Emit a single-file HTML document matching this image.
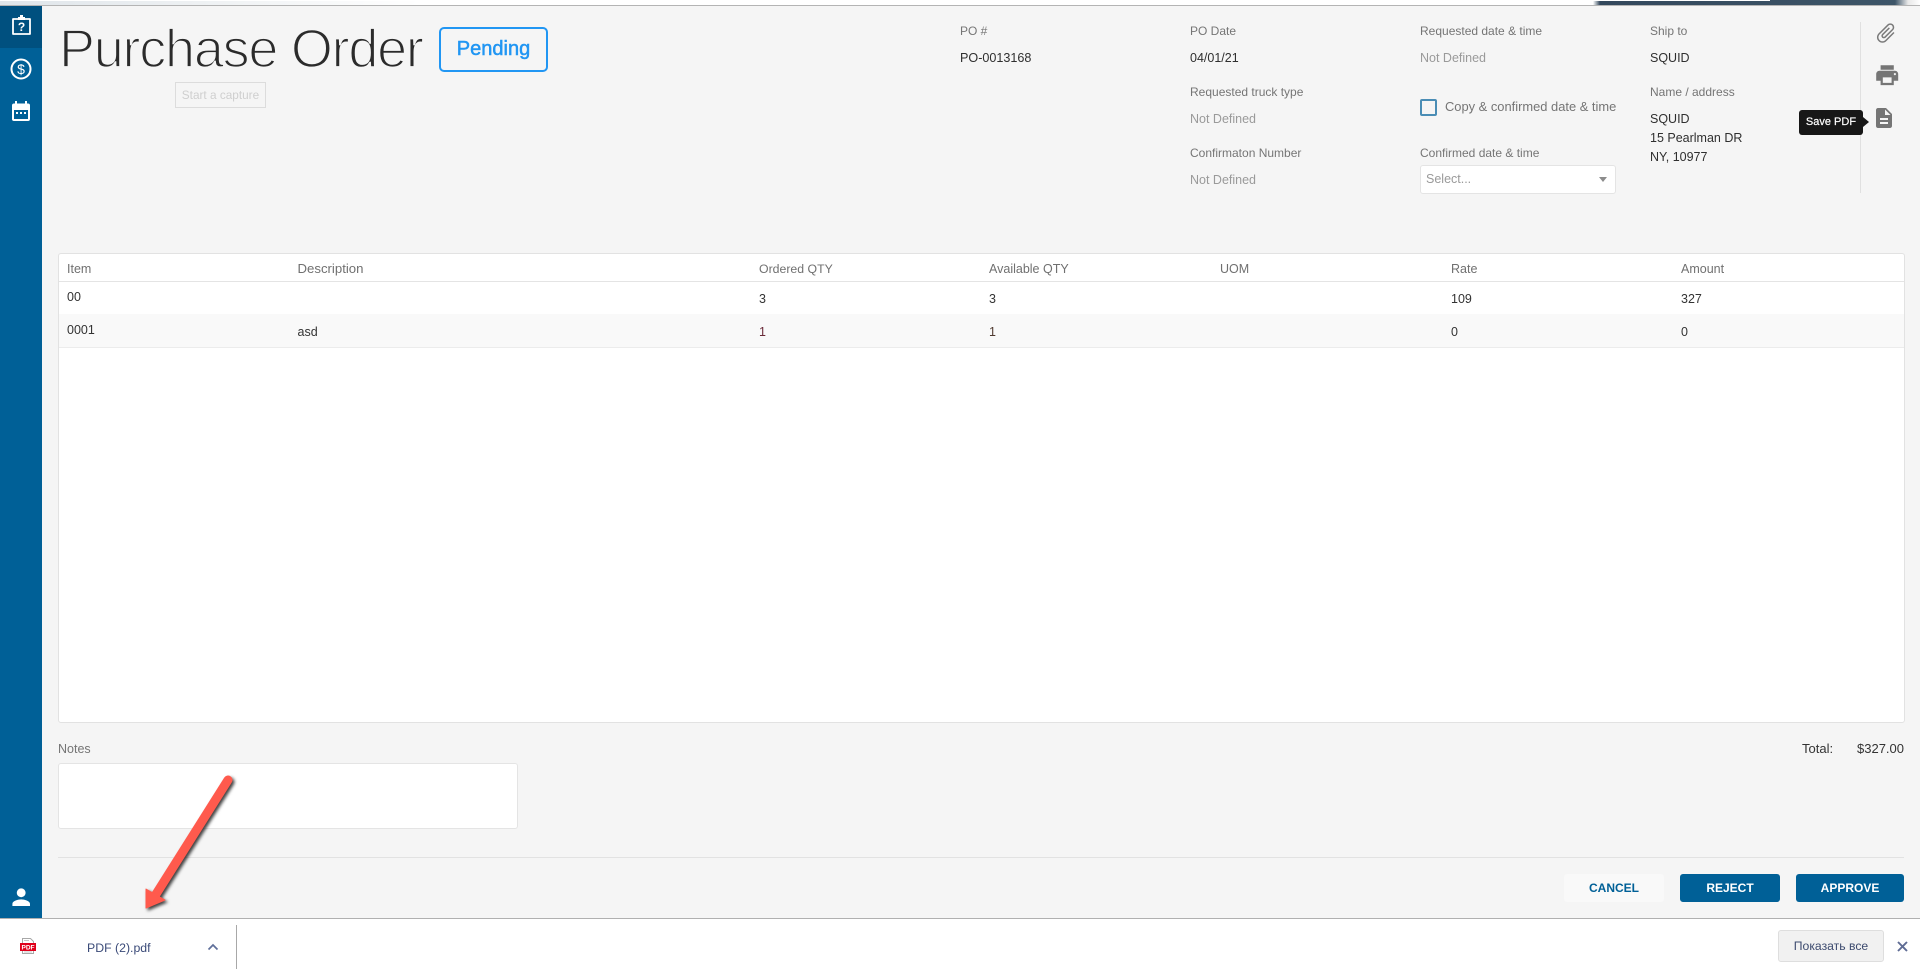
<!DOCTYPE html>
<html lang="en">
<head>
<meta charset="utf-8">
<title>Purchase Order</title>
<style>
html,body{margin:0;padding:0;width:1920px;height:975px;overflow:hidden;background:#f5f5f5;font-family:"Liberation Sans","Noto Sans CJK SC",sans-serif;}
.a{position:absolute;white-space:nowrap;}
.t{position:absolute;white-space:nowrap;line-height:20px;height:20px;font-size:12.5px;}
.l{color:#757575;font-size:12px;}
.v{color:#2f2f2f;}
.n{color:#9a9a9a;}
.h{color:#707070;}
.c{color:#333;}
.b{position:absolute;top:874px;height:28px;line-height:28px;border-radius:3px;text-align:center;font-size:12px;font-weight:bold;background:#006097;color:#fff;}
svg{position:absolute;display:block;overflow:visible;}
</style>
</head>
<body>
<!-- top strip -->
<div class="a" style="left:0;top:0;width:1920px;height:5px;background:linear-gradient(90deg,#dfe5ea 0,#eef1f3 200px,#fff 420px,#fff 1593px,#33485c 1600px,#3d5568 1895px,#e8e8e8 1908px,#fff 1920px)"></div>
<div class="a" style="left:0;top:0;width:1770px;height:1px;background:#fff"></div>
<div class="a" style="left:0;top:5px;width:1920px;height:1px;background:#b4b4b4"></div>

<!-- sidebar -->
<div class="a" style="left:0;top:6px;width:42px;height:912px;background:#006097"></div>
<div class="a" style="left:0;top:6px;width:42px;height:42px;background:#00507f"></div>
<svg style="left:0;top:0" width="42" height="130" viewBox="0 0 42 130">
  <path d="M13 19h17v15H13z" fill="none" stroke="#fff" stroke-width="1.800" stroke-linejoin="round"/>
  <path d="M18 20v-3h2v-2h3v2h2v3z" fill="#fff"/>
  <text x="21.500" y="31" font-family="Liberation Sans" font-size="12" font-weight="bold" fill="#fff" text-anchor="middle">?</text>
  <circle cx="21" cy="69" r="9.500" fill="none" stroke="#fff" stroke-width="2"/>
  <text x="21" y="74" font-family="Liberation Sans" font-size="14" fill="#fff" text-anchor="middle">$</text>
  <path d="M14 103.500h14a2 2 0 0 1 2 2v13.500a2 2 0 0 1-2 2H14a2 2 0 0 1-2-2v-13.500a2 2 0 0 1 2-2zM14 110v9h14v-9z" fill="#fff" fill-rule="evenodd"/>
  <path d="M15 101h2v3h-2zM25 101h2v3h-2zM16 112h2v2h-2zM20 112h2v2h-2zM24 112h2v2h-2z" fill="#fff"/>
</svg>
<svg style="left:8.300px;top:883.800px" width="26.400" height="26.400" viewBox="0 0 24 24"><path fill="#fff" d="M12 12c2.210 0 4-1.790 4-4s-1.790-4-4-4-4 1.790-4 4 1.790 4 4 4zm0 2c-2.670 0-8 1.340-8 4v2h16v-2c0-2.660-5.330-4-8-4z"/></svg>

<!-- title -->
<div class="a" style="left:59px;top:18px;height:62px;line-height:62px;font-size:54px;letter-spacing:-1.250px;color:#2b2b2b;-webkit-text-stroke:1.700px #f5f5f5;">Purchase Order</div>
<div class="a" style="left:439px;top:27px;width:105px;height:41px;border:2px solid #2196f3;border-radius:5px;line-height:41px;text-align:center;font-size:20px;color:#2196f3;-webkit-text-stroke:.5px #2196f3;">Pending</div>
<div class="a" style="left:175px;top:82px;width:89px;height:24px;border:1px solid #dcdcdc;line-height:24px;text-align:center;font-size:11.800px;color:#cfcfcf;">Start a capture</div>

<!-- header fields -->
<div class="t l" style="left:960px;top:21px">PO #</div>
<div class="t v" style="left:960px;top:48px;font-size:12.600px">PO-0013168</div>
<div class="t l" style="left:1190px;top:21px">PO Date</div>
<div class="t v" style="left:1190px;top:48px">04/01/21</div>
<div class="t l" style="left:1190px;top:82px">Requested truck type</div>
<div class="t n" style="left:1190px;top:109px">Not Defined</div>
<div class="t l" style="left:1190px;top:143px">Confirmaton Number</div>
<div class="t n" style="left:1190px;top:170px">Not Defined</div>
<div class="t l" style="left:1420px;top:21px">Requested date &amp; time</div>
<div class="t n" style="left:1420px;top:48px">Not Defined</div>
<div class="a" style="left:1420px;top:99px;width:13px;height:13px;border:2px solid #4a8db5;border-radius:2px"></div>
<div class="t l" style="left:1445px;top:97px;font-size:12.900px">Copy &amp; confirmed date &amp; time</div>
<div class="t l" style="left:1420px;top:143px">Confirmed date &amp; time</div>
<div class="a" style="left:1420px;top:165px;width:194px;height:27px;background:#fff;border:1px solid #e4e4e4;border-radius:3px"></div>
<div class="t n" style="left:1426px;top:169px">Select...</div>
<div class="a" style="left:1599px;top:177px;width:0;height:0;border-left:4.500px solid transparent;border-right:4.500px solid transparent;border-top:5px solid #8c8c8c"></div>
<div class="t l" style="left:1650px;top:21px">Ship to</div>
<div class="t v" style="left:1650px;top:48px">SQUID</div>
<div class="t l" style="left:1650px;top:82px">Name / address</div>
<div class="t v" style="left:1650px;top:109px">SQUID</div>
<div class="t v" style="left:1650px;top:128px">15 Pearlman DR</div>
<div class="t v" style="left:1650px;top:147px">NY, 10977</div>

<!-- right icon rail -->
<div class="a" style="left:1860px;top:22px;width:1px;height:171px;background:#e0e0e0"></div>
<svg style="left:1873.500px;top:20.500px" width="24" height="24" viewBox="0 0 24 24"><path fill="#7a7a7a" transform="rotate(45 12 12)" d="M16.500 6v11.500c0 2.210-1.790 4-4 4s-4-1.790-4-4V5c0-1.380 1.120-2.500 2.500-2.500s2.500 1.120 2.500 2.500v10.500c0 .55-.45 1-1 1s-1-.45-1-1V6H10v9.500c0 1.380 1.120 2.500 2.500 2.500s2.500-1.120 2.500-2.500V5c0-2.210-1.790-4-4-4S7 2.790 7 5v12.500c0 3.040 2.460 5.500 5.500 5.500s5.500-2.460 5.500-5.500V6h-1.500z"/></svg>
<svg style="left:1873.800px;top:61.700px" width="26.400" height="26.400" viewBox="0 0 24 24"><path fill="#757575" d="M19 8H5c-1.660 0-3 1.340-3 3v6h4v4h12v-4h4v-6c0-1.660-1.340-3-3-3zm-3 11H8v-5h8v5zm3-7c-.55 0-1-.45-1-1s.45-1 1-1 1 .45 1 1-.45 1-1 1zm-1-9H6v4h12V3z"/></svg>
<svg style="left:1872px;top:106px" width="24" height="24" viewBox="0 0 24 24"><path fill="#757575" d="M14 2H6c-1.100 0-1.990.9-1.990 2L4 20c0 1.100.89 2 1.990 2H18c1.100 0 2-.9 2-2V8l-6-6zm2 16H8v-2h8v2zm0-4H8v-2h8v2zm-3-5V3.500L18.500 9H13z"/></svg>
<div class="a" style="left:1799px;top:110px;width:64px;height:25px;background:#171717;border-radius:3px;color:#fff;font-size:11px;line-height:25px;text-align:center;-webkit-text-stroke:.2px #fff;">Save PDF</div>
<div class="a" style="left:1863px;top:117px;width:0;height:0;border-top:5.500px solid transparent;border-bottom:5.500px solid transparent;border-left:6px solid #171717"></div>

<!-- table -->
<div class="a" style="left:58px;top:253px;width:1845px;height:468px;background:#fff;border:1px solid #e2e2e2;border-radius:3px"></div>
<div class="a" style="left:59px;top:281px;width:1845px;height:1px;background:#e4e4e4"></div>
<div class="a" style="left:59px;top:314px;width:1845px;height:33px;background:#f9f9f9"></div>
<div class="a" style="left:59px;top:347px;width:1845px;height:1px;background:#ececec"></div>
<div class="t h" style="left:67px;top:259px">Item</div>
<div class="t h" style="left:297.500px;top:259px;font-size:13.200px">Description</div>
<div class="t h" style="left:759px;top:259px;font-size:12.300px">Ordered QTY</div>
<div class="t h" style="left:989px;top:259px">Available QTY</div>
<div class="t h" style="left:1220px;top:259px">UOM</div>
<div class="t h" style="left:1451px;top:259px">Rate</div>
<div class="t h" style="left:1681px;top:259px">Amount</div>
<div class="t c" style="left:67px;top:287px">00</div>
<div class="t c" style="left:759px;top:289px">3</div>
<div class="t c" style="left:989px;top:289px">3</div>
<div class="t c" style="left:1451px;top:289px">109</div>
<div class="t c" style="left:1681px;top:289px">327</div>
<div class="t c" style="left:67px;top:320px">0001</div>
<div class="t c" style="left:297.500px;top:322px">asd</div>
<div class="t" style="left:759px;top:322px;color:#6a2a38">1</div>
<div class="t" style="left:989px;top:322px;color:#4f3a30">1</div>
<div class="t c" style="left:1451px;top:322px">0</div>
<div class="t c" style="left:1681px;top:322px">0</div>

<!-- notes -->
<div class="t l" style="left:58px;top:739px;font-size:12.500px">Notes</div>
<div class="a" style="left:58px;top:763px;width:458px;height:64px;background:#fff;border:1px solid #e4e4e4;border-radius:3px"></div>
<div class="t c" style="left:1802px;top:739px;font-size:13px">Total:</div>
<div class="t c" style="left:1857px;top:739px;font-size:13px">$327.00</div>
<div class="a" style="left:58px;top:857px;width:1846px;height:1px;background:#e2e2e2"></div>

<!-- buttons -->
<div class="b" style="left:1564px;width:100px;background:#f9f9f9;color:#006097">CANCEL</div>
<div class="b" style="left:1680px;width:100px">REJECT</div>
<div class="b" style="left:1796px;width:108px">APPROVE</div>

<!-- download bar -->
<div class="a" style="left:0;top:918px;width:1920px;height:57px;background:#fff"></div>
<div class="a" style="left:0;top:918px;width:1920px;height:1px;background:#b0b0b0"></div>
<svg style="left:20px;top:938px" width="16" height="16" viewBox="0 0 16 16">
  <path d="M2.500.5h8l3 3v12h-11z" fill="#fff" stroke="#a8a8a8"/>
  <path d="M4 2.500h5M4 14h8" stroke="#c4c4c4"/>
  <rect x="0" y="5" width="16" height="8" fill="#e0001b"/>
  <text x="8" y="11.700" font-family="Liberation Sans" font-size="6.500" font-weight="bold" fill="#fff" text-anchor="middle">PDF</text>
</svg>
<div class="t" style="left:87px;top:938px;font-size:12.300px;color:#3a4a78">PDF (2).pdf</div>
<svg style="left:207px;top:943px" width="12" height="8" viewBox="0 0 12 8"><path d="M1.500 6.500L6 2l4.500 4.500" fill="none" stroke="#5f6f9a" stroke-width="1.700"/></svg>
<div class="a" style="left:236px;top:925px;width:1px;height:44px;background:#a8a8a8"></div>
<div class="a" style="left:1778px;top:930px;width:104px;height:30px;background:#f1f1f1;border:1px solid #dedede;border-radius:3px;text-align:center;line-height:30px;font-size:12.200px;color:#3c4a6e">Показать все</div>
<svg style="left:1897px;top:941px" width="11" height="11" viewBox="0 0 11 11"><path d="M1 1l9 9M10 1l-9 9" stroke="#5f6c94" stroke-width="1.900"/></svg>

<!-- annotation arrow -->
<svg style="left:0;top:0;filter:drop-shadow(2.500px 2.500px 1.500px rgba(0,0,0,.75))" width="1920" height="975" viewBox="0 0 1920 975">
  <path d="M228 780L153 899" stroke="#ff5a4d" stroke-width="9" stroke-linecap="round" fill="none"/>
  <path d="M146 908L146 889L165 900Z" fill="#ff5a4d" stroke="#ff5a4d" stroke-width="1" stroke-linejoin="round"/>
</svg>
</body>
</html>
